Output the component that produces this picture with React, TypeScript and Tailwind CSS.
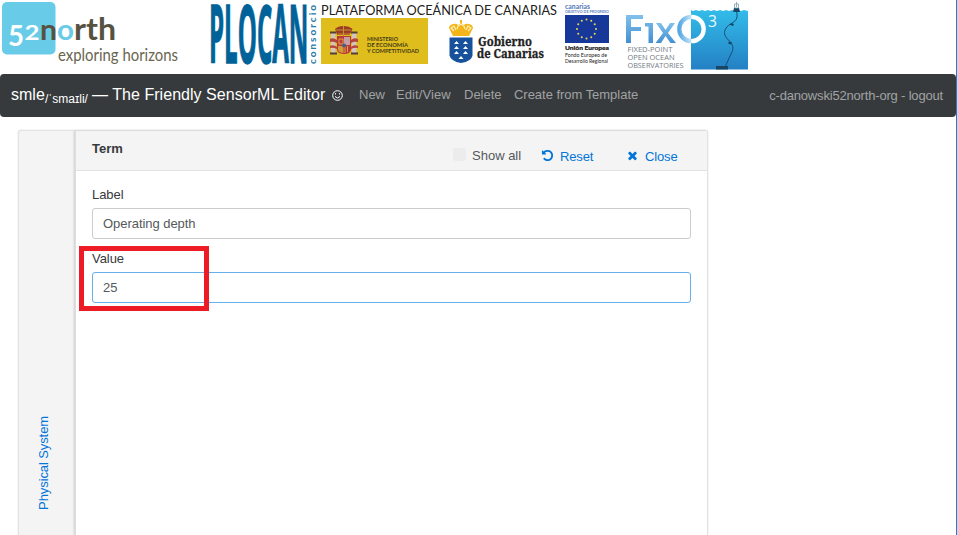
import React from 'react';

function North52() {
  return (
    <svg className="h-[74px] w-[200px] shrink-0" viewBox="0 0 200 74" fontFamily="Lato, sans-serif">
      <rect x="2" y="2" width="53.500" height="52.500" rx="5" fill="#68cce9" />
      <g fontWeight="700">
        <text x="8" y="45.500" fontSize="28" fill="#fff" textLength="16" lengthAdjust="spacingAndGlyphs">5</text>
        <text x="24.500" y="40" fontSize="20" fill="#fff" textLength="15" lengthAdjust="spacingAndGlyphs">2</text>
        <text x="40" y="40" fontSize="29" fill="#56523f" textLength="17" lengthAdjust="spacingAndGlyphs">n</text>
        <text x="57" y="40" fontSize="28" fill="#68cce9" textLength="17" lengthAdjust="spacingAndGlyphs">o</text>
        <text x="74" y="40" fontSize="31" fill="#56523f" textLength="42" lengthAdjust="spacingAndGlyphs">rth</text>
      </g>
      <text x="58" y="61" fontSize="16.500" fill="#69654f" textLength="120" lengthAdjust="spacingAndGlyphs">exploring horizons</text>
    </svg>
  );
}

function CoatOfArms() {
  return (
    <g>
      <path d="M331 33h4.500v20h-4.500zM352 33h4.500v20h-4.500z" fill="#d3c4bd" />
      <path d="M330 32.500h6.500M351 32.500h6.500M330 53.500h7M351 53.500h7" stroke="#534039" strokeWidth="2" />
      <path d="M330 39q3-2 7 1v3q-4-2-7-1zM358 39q-4-2-7 1v3q3-2 7-1zM330 46q3-2 7 1v2q-4-2-7-1zM358 46q-4-2-7 1v2q4-2 7-1z" fill="#b5443b" />
      <path d="M335 29q3-3 8.500-3t9 3l-3 6h-12z" fill="#9b3c27" />
      <path d="M336 30h15M338 34h12M343.500 26v10" stroke="#c9922e" strokeWidth="1" />
      <path d="M337 36h14v14q-1 4-7 4t-7-4z" fill="#b83a3e" />
      <path d="M344 37h6v8h-6z" fill="#c79da4" />
      <path d="M338 46h5.500v7q-4 0-5.500-3z" fill="#d39b35" />
      <path d="M345 46v7M347.500 46v6M339 39h4v5h-4z" stroke="#dfa33a" fill="none" />
      <circle cx="344" cy="45.500" r="2" fill="#485c87" />
    </g>
  );
}

function Plocan() {
  const stars = Array.from({ length: 12 }, (_, i) => [586.5 + 9.5 * Math.sin((i * Math.PI) / 6), 29 - 9.5 * Math.cos((i * Math.PI) / 6)]);
  return (
    <svg className="h-[74px] w-[415px] shrink-0" viewBox="200 0 415 74" fontFamily="Lato, sans-serif">
      <text transform="translate(209 63) scale(.61 1.95)" fontFamily="Open Sans, sans-serif" fontWeight="700" fontSize="41" fill="#006298" stroke="#006298" strokeWidth=".7" textLength="163" lengthAdjust="spacingAndGlyphs">PLOCAN</text>
      <text transform="translate(315.500 64) rotate(-90)" fontSize="10" fontWeight="700" fill="#287aa7" textLength="59">consorcio</text>
      <text x="321" y="15" fontSize="14" fill="#202020" textLength="236" lengthAdjust="spacingAndGlyphs">PLATAFORMA OCEÁNICA DE CANARIAS</text>
      <path d="M321 18h107v46H321z" fill="#dfbd1c" />
      <CoatOfArms />
      <g fontSize="5.500" fontWeight="700" fill="#453b18">
        <text x="367" y="40.500" textLength="31" lengthAdjust="spacingAndGlyphs">MINISTERIO</text>
        <text x="367" y="46.500" textLength="41" lengthAdjust="spacingAndGlyphs">DE ECONOMÍA</text>
        <text x="367" y="52.500" textLength="52" lengthAdjust="spacingAndGlyphs">Y COMPETITIVIDAD</text>
      </g>
      <path d="M449.500 37.500h23v18q-1 6-11.500 7.500-10-1.500-11.500-7.500z" fill="#17519b" />
      <path d="M454 44l2.500-3 2.500 3zM463 44l2.500-3 2.500 3zM454 49l2.500-3 2.500 3zM463 49l2.500-3 2.500 3zM454 54l2.500-3 2.500 3zM463 54l2.500-3 2.500 3zM458.500 59l2.500-3 2.500 3z" fill="#fff" />
      <path d="M453 36l-4-8q0-3 4-4 3-1 5 1l2-1v-4h2v4l2 1q2-2 5-1 4 1 4 4l-4 8z" fill="#f4b51b" />
      <path d="M454 31l-3-3 3-2 2 4m1-1 1-3 3-2 3 2 1 3m1 1 2-4 3 2-3 3" fill="none" stroke="#fff2c0" strokeWidth="1.100" />
      <g fontFamily="Noto Serif, Liberation Serif, serif" fontWeight="700" fill="#222">
        <text x="478" y="46" fontSize="12" textLength="54" lengthAdjust="spacingAndGlyphs" stroke="#222" strokeWidth=".3">Gobierno</text>
        <text x="477" y="58" fontSize="12" textLength="67" lengthAdjust="spacingAndGlyphs" stroke="#222" strokeWidth=".3">de Canarias</text>
      </g>
      <g fill="#5d80bc">
        <text x="565" y="8.500" fontSize="6.500" fontWeight="900" textLength="25" lengthAdjust="spacingAndGlyphs">canarias</text>
        <text x="565" y="13" fontSize="3.600" fontWeight="700" textLength="44" lengthAdjust="spacingAndGlyphs">OBJETIVO DE PROGRESO</text>
      </g>
      <path d="M565 15h44v28H565z" fill="#173799" />
      {stars.map(([x, y], i) => <circle key={i} cx={x} cy={y} r="1" fill="#e6df52" />)}
      <text x="565" y="50" fontSize="6" fontWeight="900" fill="#222" stroke="#222" strokeWidth=".2" textLength="44" lengthAdjust="spacingAndGlyphs">Unión Europea</text>
      <g fontSize="5" fill="#222">
        <text x="565" y="57" textLength="42" lengthAdjust="spacingAndGlyphs">Fondo Europeo de</text>
        <text x="565" y="63" textLength="43" lengthAdjust="spacingAndGlyphs">Desarrollo Regional</text>
      </g>
    </svg>
  );
}

function FixO3() {
  return (
    <svg className="h-[74px] w-[140px] shrink-0" viewBox="615 0 140 74" fontFamily="Open Sans, sans-serif">
      <defs>
        <linearGradient id="sea" x2="0" y2="1"><stop stopColor="#32bce9" /><stop offset="1" stopColor="#2480c4" /></linearGradient>
        <linearGradient id="word" x2="0" y2="1"><stop stopColor="#80c1ee" /><stop offset="1" stopColor="#438fcf" /></linearGradient>
        <linearGradient id="ring"><stop stopColor="#56a9e3" /><stop offset=".48" stopColor="#c4e4f7" /><stop offset=".52" stopColor="#fff" /><stop offset="1" stopColor="#fff" /></linearGradient>
      </defs>
      <path d="M691 10l2 1 3-1 3 1 3-1 3 1 3-1 3 1 3-1 3 1 3-1 3 1 3-1 3 1 3-1 3 1 3-1 3 1 3-1 4 1v58.500h-57z" fill="url(#sea)" />
      <path d="M626 15h17v4h-12v8h10v4h-10v12h-5zM645 23h8v20h-4.500v-16.500h-3.500z" fill="url(#word)" />
      <path d="M656 23h5l4.500 7 4.500-7h5l-7 10 8 10h-5.500l-5-7-4.500 7h-5.500l7.500-10z" fill="url(#word)" />
      <circle cx="691.500" cy="29" r="12.200" fill="none" stroke="url(#ring)" strokeWidth="4.300" />
      <text x="708" y="27" fontSize="16" fill="#e9f9ff" textLength="9" lengthAdjust="spacingAndGlyphs">3</text>
      <path d="M736.500 11c2 8-1 10-6 13s-9 9-3 15 7 9 3 16l-5 11" fill="none" stroke="#164d78" strokeWidth="1" />
      <path d="M734 8h5l1 4h-7zM716 66h12v3.500h-12zM729 41.500l3 1-1 2-3-1zM731 23l3 1-1 2-3-1z" fill="#164767" />
      <path d="M734.500 4h4v4h-4zM736.500 2v5" fill="none" stroke="#7b9fac" strokeWidth=".8" />
      <g fontSize="8" fill="#737b83">
        <text x="627.500" y="52" textLength="45" lengthAdjust="spacingAndGlyphs">FIXED-POINT</text>
        <text x="627.500" y="60" textLength="47" lengthAdjust="spacingAndGlyphs">OPEN OCEAN</text>
        <text x="627.500" y="68" textLength="56" lengthAdjust="spacingAndGlyphs">OBSERVATORIES</text>
      </g>
    </svg>
  );
}

function Field({ label, value, focused = false }: { label: string; value: string; focused?: boolean }) {
  return (
    <label className="block h-16 pt-[13px]">
      <span className="block h-[24px] text-[13px] leading-[21px] tracking-[-0.05px] text-[#373a3c]">{label}</span>
      <input defaultValue={value} className={`block h-[31px] w-full rounded-[3px] border bg-white px-2.5 text-[13px] tracking-[-0.05px] text-[#55595c] outline-none ${focused ? 'border-[#66afe9]' : 'border-[#ccc]'}`} />
    </label>
  );
}

export default function App() {
  return (
    <div className="relative h-[535px] w-[957px] overflow-hidden border-r border-[#1681d2] bg-white font-['Liberation_Sans',Arial,sans-serif]">
      <header className="flex h-[74px]"><North52 /><Plocan /><FixO3 /></header>
      <nav className="flex h-[43px] items-center rounded-[4px] bg-[#373a3c] pb-0.5 pl-[11px] pr-[13px] text-[13px] text-[#a0a3a4]">
        <div className="flex w-[348px] shrink-0 items-baseline whitespace-nowrap text-white">
          <span className="w-[34px] text-base">smle</span>
          <span className="relative top-[3px] w-[47px] text-xs">/ˈsmaɪli/</span>
          <span className="text-base tracking-[0.04px]">— The Friendly SensorML Editor</span>
          <svg className="ml-[7px] mt-[2px] size-[11px] self-center" viewBox="0 0 11 11" fill="none" stroke="white"><circle cx="5.500" cy="5.500" r="4.800" /><path d="M3 6.500q2.500 3 5 0M3.500 3.200v1.300M7.500 3.200v1.300" /></svg>
        </div>
        <span className="w-[37px] shrink-0">New</span>
        <span className="w-[68px] shrink-0 tracking-[0.1px]">Edit/View</span>
        <span className="w-[50px] shrink-0">Delete</span>
        <span className="whitespace-nowrap tracking-[-0.03px]">Create from Template</span>
        <span className="ml-auto whitespace-nowrap pt-0.5 tracking-[-0.18px]">c-danowski52north-org - logout</span>
      </nav>
      <main className="ml-[18px] mt-[13px] flex h-[405px] w-[690px] rounded-t-[3px] border border-b-0 border-[#e3e3e3] bg-[#f4f4f4] shadow-[0_0_2px_#ddd]">
        <aside className="flex w-[56px] items-end justify-center pb-[25px] pr-1.5">
          <a className="rotate-180 whitespace-nowrap text-[13px] tracking-[-0.1px] text-[#0275d8] [writing-mode:vertical-rl]">Physical System</a>
        </aside>
        <section className="flex-1 border-l border-[#dedede] bg-white shadow-[-1px_0_2px_#ccc]">
          <div className="flex h-10 border-b border-[#e2e2e2] bg-[#f4f4f4] pl-4 text-[13px] text-[#55595c]">
            <h1 className="w-[361px] pt-[8px] font-bold leading-5 text-[#373a3c]">Term</h1>
            <span className="mt-[17px] size-[13px] rounded-[2px] bg-[#ececec]" />
            <span className="ml-[6px] w-[69px] pt-[15px] leading-5">Show all</span>
            <a className="flex w-[86px] pt-[16px] leading-5 tracking-[-0.15px] text-[#0275d8]">
              <svg className="mr-[6px] mt-[2px] size-[13px]" viewBox="0 0 1792 1792" fill="currentColor"><path d="M1664 896q0 156-61 298t-164 245-245 164-298 61q-172 0-327-72.500t-264-204.500q-7-10-6.500-22.500t8.500-20.500l137-138q10-9 25-9 16 2 23 12 73 95 179 147t225 52q104 0 198.500-40.500t163.500-109.500 109.500-163.500 40.500-198.500-40.500-198.500-109.500-163.500-163.500-109.500-198.500-40.500q-98 0-188 35.500t-160 101.500l137 138q31 30 14 69-17 40-59 40h-448q-26 0-45-19t-19-45v-448q0-42 40-59 39-17 69 14l130 129q107-101 244.500-156.500t284.500-55.500q156 0 298 61t245 164 164 245 61 298z" /></svg>Reset
            </a>
            <a className="flex pt-[16px] leading-5 tracking-[-0.15px] text-[#0275d8]">
              <svg className="-ml-px mr-[6px] mt-[2px] size-[13px]" viewBox="0 0 1792 1792" fill="currentColor"><path d="M1490 1322q0 40-28 68l-136 136q-28 28-68 28t-68-28l-294-294-294 294q-28 28-68 28t-68-28l-136-136q-28-28-28-68t28-68l294-294-294-294q-28-28-28-68t28-68l136-136q28-28 68-28t68 28l294 294 294-294q28-28 68-28t68 28l136 136q28 28 28 68t-28 68l-294 294 294 294q28 28 28 68z" /></svg>Close
            </a>
          </div>
          <div className="px-4"><Field label="Label" value="Operating depth" /><Field label="Value" value="25" focused /></div>
        </section>
      </main>
      <div className="pointer-events-none absolute left-[79px] top-[246px] h-[65px] w-[130px] border-[5px] border-[#ed1c24]" />
    </div>
  );
}
